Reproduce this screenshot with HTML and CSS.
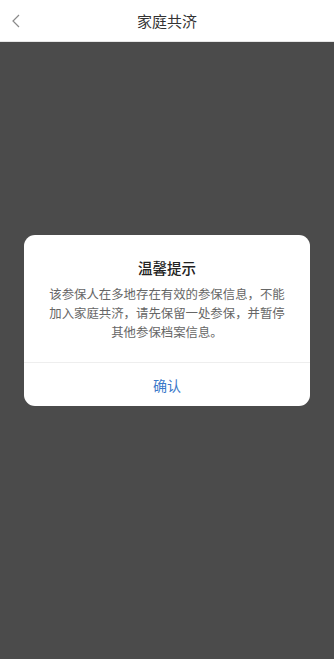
FILE: index.html
```html
<!DOCTYPE html>
<html lang="zh-CN">
<head>
    <meta charset="UTF-8">
    <meta name="viewport" content="width=device-width, initial-scale=1.0">
    <title>家庭共济</title>
    <link rel="stylesheet" href="styles.css">
</head>
<body>
    <div class="page">
        <header class="nav">
            <span class="back">
                <svg width="10" height="14" viewBox="0 0 10 14"><path d="M8 1 L2 7 L8 13" fill="none" stroke="#8a8a8a" stroke-width="1.2"/></svg>
            </span>
            <h1 class="nav-title">家庭共济</h1>
        </header>
        <div class="mask">
            <div class="dialog">
                <div class="dialog-body">
                    <h2 class="dialog-title">温馨提示</h2>
                    <p class="dialog-text">该参保人在多地存在有效的参保信息，不能加入家庭共济，请先保留一处参保，并暂停其他参保档案信息。</p>
                </div>
                <div class="dialog-btn">确认</div>
            </div>
        </div>
    </div>
</body>
</html>
```

FILE: styles.css
```css
* {
    margin: 0;
    padding: 0;
    box-sizing: border-box;
}

body {
    font-family: "Noto Sans CJK SC", "Noto Sans", sans-serif;
    background: #4b4b4b;
}

.page {
    min-height: 100vh;
    display: flex;
    flex-direction: column;
}

.nav {
    height: 42px;
    background: #fff;
    border-bottom: 1px solid #e6e6e6;
    position: relative;
    display: flex;
    align-items: center;
    justify-content: center;
}

.back {
    position: absolute;
    left: 11px;
    top: 14px;
    display: flex;
}

.nav-title {
    font-size: 15px;
    font-weight: 400;
    color: #333;
}

.mask {
    flex: 1;
    background: #4b4b4b;
    display: flex;
    align-items: center;
    justify-content: center;
    padding-bottom: 60px;
}

.dialog {
    width: 286px;
    background: #fff;
    border-radius: 11px;
    overflow: hidden;
}

.dialog-body {
    padding: 23px 25px 20px;
    text-align: center;
    border-bottom: 1px solid #eeeeee;
}

.dialog-title {
    font-size: 14.5px;
    font-weight: 500;
    color: #222;
    line-height: 20px;
    margin-bottom: 7px;
}

.dialog-text {
    font-size: 12.4px;
    line-height: 19px;
    color: #666;
}

.dialog-btn {
    height: 43px;
    display: flex;
    align-items: center;
    justify-content: center;
    font-size: 14px;
    color: #3b79c9;
}
```
